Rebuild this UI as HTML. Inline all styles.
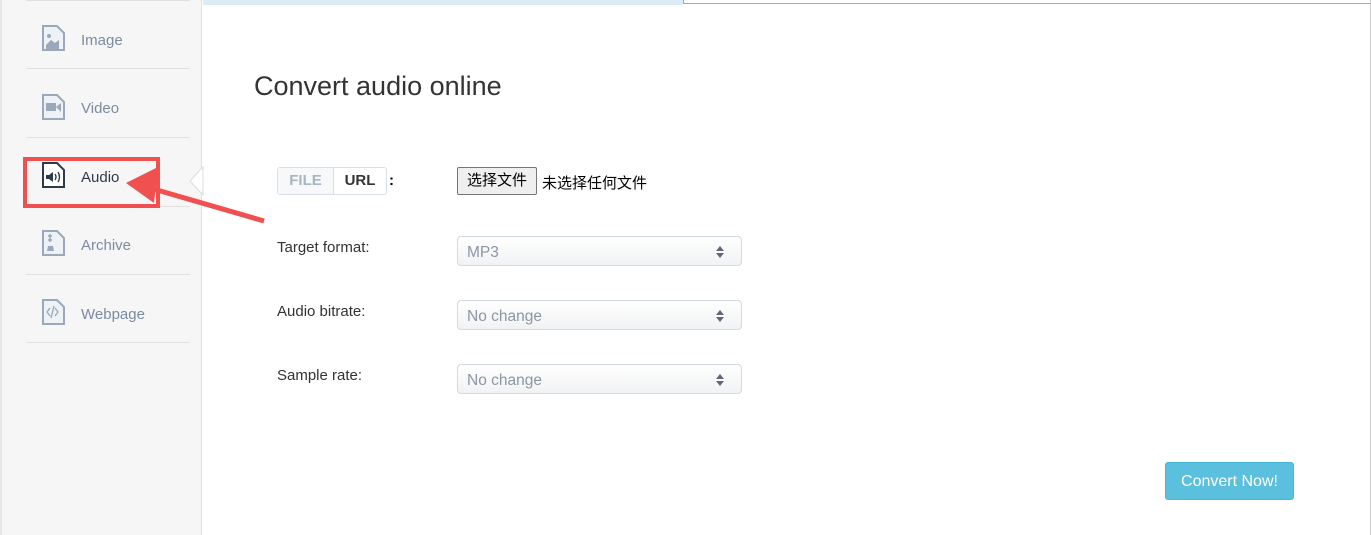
<!DOCTYPE html>
<html><head><meta charset="utf-8"><style>
body{margin:0;width:1371px;height:535px;position:relative;overflow:hidden;background:#fff;font-family:"Liberation Sans","Noto Sans CJK SC",sans-serif}
.side{position:absolute;left:0;top:0;width:202px;height:535px;background:#f6f6f6;border-right:1px solid #e0e0e0;border-left:2px solid #e6e6e6;box-sizing:border-box}
.sep{position:absolute;left:24px;width:164px;height:1px;background:#e0e0e0}
.item{position:absolute;left:81px;font-size:15px;color:#7b8ba3}
.lbl{position:absolute;left:277px;font-size:15px;color:#333}
.sel{position:absolute;left:457px;width:285px;height:30px;box-sizing:border-box;border:1px solid #cfdbe6;border-radius:4px;background:linear-gradient(#fff,#f0f2f4);font-size:15.5px;color:#8a96a6;padding:7px 9px}
.sel:after{content:"";position:absolute;right:17px;top:9px;border:4px solid transparent;border-bottom:5px solid #667;border-top:0}
.sel:before{content:"";position:absolute;right:17px;top:16px;border:4px solid transparent;border-top:5px solid #667;border-bottom:0}
</style></head><body>
<div style="position:absolute;left:203px;top:0;width:480px;height:5px;background:#dcecf7"></div>
<div style="position:absolute;left:683px;top:0;width:688px;height:4px;border-bottom:1px solid #a8a8a8;border-left:1px solid #a8a8a8;box-sizing:border-box"></div>
<div style="position:absolute;right:0;top:0;width:1px;height:535px;background:#ccc"></div>
<div class="side">
<div class="sep" style="top:0"></div><div class="sep" style="top:68px"></div><div class="sep" style="top:137px"></div><div class="sep" style="top:206px"></div><div class="sep" style="top:274px"></div><div class="sep" style="top:342px"></div>
</div>
<svg style="position:absolute;left:0;top:0" width="210" height="360">
<g fill="#eef1f5" stroke="#9aa8ba" stroke-width="2">
<path d="M43 26h14l7 7v17h-21z"/><path d="M43 95h14l7 7v17h-21z"/><path d="M43 231h14l7 7v17h-21z"/><path d="M43 300h14l7 7v17h-21z"/>
</g>
<path d="M46 45l5-5 4 3 4-3v9h-13z" fill="#9aa8ba"/><circle cx="49" cy="36" r="2" fill="#9aa8ba"/>
<rect x="46" y="103" width="10" height="8" fill="#9aa8ba"/><path d="M56 107l5-4v9z" fill="#9aa8ba"/>
<path d="M50 234v8M48 236h4M48 240h4" stroke="#9aa8ba" stroke-width="1.5"/><path d="M48 246h5l1 5h-7z" fill="#9aa8ba"/>
<path d="M50 308l-3 4 3 4M55 308l3 4-3 4M54 306l-3 12" stroke="#9aa8ba" stroke-width="1.3" fill="none"/>
<path d="M43 163h14l7 7v17h-21z" fill="#fff" stroke="#2e3a4a" stroke-width="2"/>
<path d="M46 175h3l4-3v10l-4-3h-3z" fill="#2e3a4a"/><path d="M55 174q2 3 0 6M58 172q3 5 0 10" stroke="#2e3a4a" stroke-width="1.4" fill="none"/>
<path d="M203 167l-13 14 13 14z" fill="#fff" stroke="#ddd"/>
</svg>
<div class="item" style="top:32px">Image</div>
<div class="item" style="top:100px">Video</div>
<div class="item" style="top:169px;color:#2e3a4a">Audio</div>
<div class="item" style="top:237px">Archive</div>
<div class="item" style="top:306px">Webpage</div>
<div style="position:absolute;left:23px;top:157px;width:137px;height:51px;border:4px solid #f0504f;box-sizing:border-box"></div>
<svg style="position:absolute;left:0;top:0" width="300" height="240"><path d="M264 221L150 188" stroke="#f0504f" stroke-width="5"/><path d="M126 183l32-16-4 36z" fill="#f0504f"/></svg>
<div style="position:absolute;left:254px;top:71px;font-size:27px;color:#333">Convert audio online</div>
<div style="position:absolute;left:277px;top:167px;width:110px;height:28px;border:1px solid #d5e0ea;border-radius:3px;box-sizing:border-box;font-weight:bold;font-size:15px;display:flex">
<div style="width:55px;text-align:center;line-height:26px;color:#aab4c2;background:#f6f8fa;border-right:1px solid #d5e0ea">FILE</div><div style="flex:1;text-align:center;line-height:26px;color:#333">URL</div></div>
<div style="position:absolute;left:389px;top:172px;font-weight:bold;font-size:15px">:</div>
<div style="position:absolute;left:457px;top:167px;width:80px;height:28px;border:1px solid #767676;border-radius:2px;background:#efefef;box-sizing:border-box;font-size:15px;text-align:center;line-height:26px;color:#000">选择文件</div>
<div style="position:absolute;left:542px;top:172px;font-size:15px;color:#000">未选择任何文件</div>
<div class="lbl" style="top:239px">Target format:</div>
<div class="lbl" style="top:303px">Audio bitrate:</div>
<div class="lbl" style="top:367px">Sample rate:</div>
<div class="sel" style="top:236px">MP3</div>
<div class="sel" style="top:300px">No change</div>
<div class="sel" style="top:364px">No change</div>
<div style="position:absolute;left:1165px;top:462px;width:129px;height:38px;background:#5bc0de;border:1px solid #46b8da;border-radius:3px;box-sizing:border-box;color:#fff;font-size:16px;text-align:center;line-height:37px">Convert Now!</div>
</body></html>
